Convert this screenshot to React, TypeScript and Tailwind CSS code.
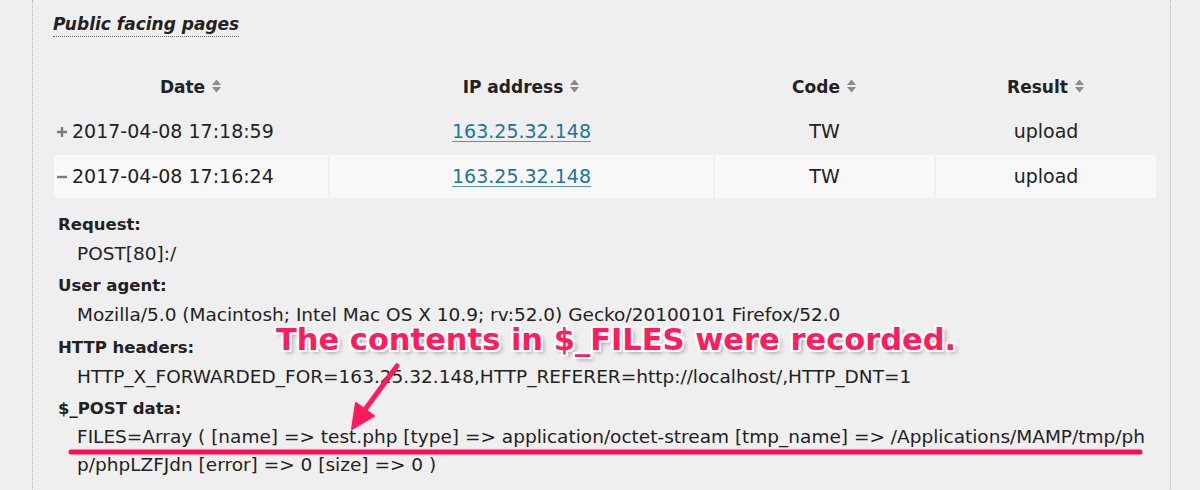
import React from "react";

function SortIcon() {
  return (
    <svg width="11" height="16" viewBox="0 0 11 16" className="inline-block ml-[6px] -mt-[3px] align-middle">
      <path d="M1 7 L5.5 1.5 L10 7 Z" fill="#8a8a8a" />
      <path d="M1 9 L5.5 14.5 L10 9 Z" fill="#8a8a8a" />
    </svg>
  );
}

function PlusIcon() {
  return (
    <svg width="12" height="12" viewBox="0 0 12 12" className="inline-block mr-[4px] -mt-[2px] align-middle">
      <path d="M1 6 H11 M6 1 V11" stroke="#7a7a7a" strokeWidth="2.4" />
    </svg>
  );
}

function MinusIcon() {
  return (
    <svg width="12" height="12" viewBox="0 0 12 12" className="inline-block mr-[4px] -mt-[2px] align-middle">
      <path d="M1 6 H11" stroke="#7a7a7a" strokeWidth="2.4" />
    </svg>
  );
}

export default function App() {
  return (
    <div className="relative w-[1200px] h-[490px] overflow-hidden bg-[#efefef] text-[#222] font-['DejaVu_Sans',sans-serif]">
      <div className="ml-[32px] w-[1139px] h-full border-l border-r border-dotted border-[#b8b8b8] pl-[20px] pr-[12px]">
        <div className="pt-[13px]">
          <span className="inline-block text-[17px] leading-[22px] font-bold italic border-b border-dotted border-[#666] pb-[1px]">
            Public facing pages
          </span>
        </div>

        <table className="border-separate border-spacing-[2px] w-[1106px] -ml-[1px] mt-[25px] table-fixed">
          <colgroup>
            <col className="w-[274px]" />
            <col className="w-[383px]" />
            <col className="w-[219px]" />
            <col className="w-[220px]" />
          </colgroup>
          <thead>
            <tr className="h-[44px]">
              <th className="text-[17px] font-bold text-center pt-[3px]">Date<SortIcon /></th>
              <th className="text-[17px] font-bold text-center pt-[3px]">IP address<SortIcon /></th>
              <th className="text-[17px] font-bold text-center pt-[3px]">Code<SortIcon /></th>
              <th className="text-[17px] font-bold text-center pt-[3px]">Result<SortIcon /></th>
            </tr>
          </thead>
          <tbody className="text-[19px]">
            <tr className="h-[43px]">
              <td className="pl-[2px] text-left whitespace-nowrap"><PlusIcon />2017-04-08 17:18:59</td>
              <td className="text-center"><span className="text-[#21759b] underline decoration-[#5b8fb0] underline-offset-[3px]">163.25.32.148</span></td>
              <td className="text-center">TW</td>
              <td className="text-center">upload</td>
            </tr>
            <tr className="h-[43px]">
              <td className="pl-[2px] text-left whitespace-nowrap bg-[#f8f8f8] rounded-[2px]"><MinusIcon />2017-04-08 17:16:24</td>
              <td className="text-center bg-[#f8f8f8] rounded-[2px]"><span className="text-[#21759b] underline decoration-[#5b8fb0] underline-offset-[3px]">163.25.32.148</span></td>
              <td className="text-center bg-[#f8f8f8] rounded-[2px]">TW</td>
              <td className="text-center bg-[#f8f8f8] rounded-[2px]">upload</td>
            </tr>
          </tbody>
        </table>

        <dl className="mt-[10px] pl-[5px]">
          <dt className="text-[16.5px] font-bold leading-[29px]">Request:</dt>
          <dd className="text-[18.5px] leading-[29px] pl-[19px] mb-[3px]">POST[80]:/</dd>
          <dt className="text-[16.5px] font-bold leading-[29px]">User agent:</dt>
          <dd className="text-[18.5px] leading-[29px] pl-[19px] mb-[4px]">Mozilla/5.0 (Macintosh; Intel Mac OS X 10.9; rv:52.0) Gecko/20100101 Firefox/52.0</dd>
          <dt className="text-[16.5px] font-bold leading-[29px]">HTTP headers:</dt>
          <dd className="text-[18.5px] leading-[29px] pl-[19px] mb-[3px]">HTTP_X_FORWARDED_FOR=163.25.32.148,HTTP_REFERER=http://localhost/,HTTP_DNT=1</dd>
          <dt className="text-[16.5px] font-bold leading-[29px]">$_POST data:</dt>
          <dd className="text-[18.5px] leading-[28px] pl-[19px] whitespace-nowrap">
            FILES=Array ( [name] =&gt; test.php [type] =&gt; application/octet-stream [tmp_name] =&gt; /Applications/MAMP/tmp/ph
            <br />
            p/phpLZFJdn [error] =&gt; 0 [size] =&gt; 0 )
          </dd>
        </dl>
      </div>

      <svg className="absolute left-0 top-0 pointer-events-none" width="1200" height="490" viewBox="0 0 1200 490">
        <line x1="71" y1="452" x2="1140" y2="452" stroke="#ff0a55" strokeWidth="5" strokeLinecap="round" />
        <line x1="397" y1="366" x2="364" y2="411" stroke="#ff1a5e" strokeWidth="5" strokeLinecap="round" />
        <polygon points="352,429 374,416 356,403" fill="#ff1a5e" stroke="#ff1a5e" strokeWidth="2" strokeLinejoin="round" />
      </svg>

      <div className="absolute left-[276px] top-[321px] text-[30.5px] leading-[38px] font-bold text-[#ff1c5c] font-['DejaVu_Sans',sans-serif] whitespace-nowrap [text-shadow:2px_0_0_#fff,-2px_0_0_#fff,0_2px_0_#fff,0_-2px_0_#fff,2px_2px_0_#fff,-2px_-2px_0_#fff,2px_-2px_0_#fff,-2px_2px_0_#fff,3px_3px_4px_rgba(0,0,0,0.35)]">
        The contents in $_FILES were recorded.
      </div>
    </div>
  );
}
